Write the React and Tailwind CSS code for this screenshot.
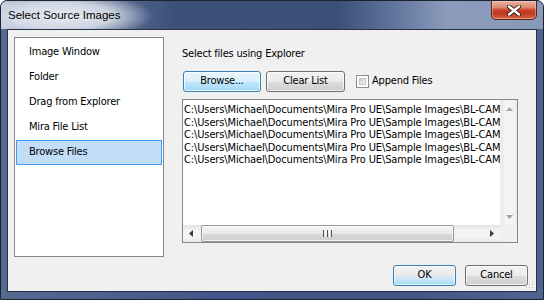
export default function App() {
  const items = ["Image Window", "Folder", "Drag from Explorer", "Mira File List", "Browse Files"];
  const files = [
    "C:\\Users\\Michael\\Documents\\Mira Pro UE\\Sample Images\\BL-CAM-01.fts",
    "C:\\Users\\Michael\\Documents\\Mira Pro UE\\Sample Images\\BL-CAM-02.fts",
    "C:\\Users\\Michael\\Documents\\Mira Pro UE\\Sample Images\\BL-CAM-03.fts",
    "C:\\Users\\Michael\\Documents\\Mira Pro UE\\Sample Images\\BL-CAM-04.fts",
    "C:\\Users\\Michael\\Documents\\Mira Pro UE\\Sample Images\\BL-CAM-05.fts",
  ];
  return (
    <div className="w-[544px] h-[300px] flex flex-col border border-[#1c2230] rounded-t-[7px] bg-[linear-gradient(to_right,#56698f_0%,#41578a_40%,#3f5482_70%,#4d6392_100%)] overflow-hidden font-['DejaVu_Sans_Condensed',Tahoma,sans-serif] text-[11px] tracking-[-0.2px] text-black">
      {/* title bar */}
      <div className="h-[28px] flex items-start bg-[radial-gradient(ellipse_90px_24px_at_62px_15px,rgba(232,237,243,1)_0%,rgba(222,228,237,0.85)_55%,rgba(222,228,237,0)_100%),linear-gradient(to_right,#b9c4d6_0%,#6d7fa2_12%,#3c5079_32%,#3b4f78_62%,#5e729a_72%,#8a9bbb_82%,#8899b9_100%)]">
        <span className="ml-[7px] mt-[7px] leading-[15px] text-[11.5px] tracking-normal font-['Liberation_Sans',Arial,sans-serif] text-black">Select Source Images</span>
        <div className="ml-auto mr-[6px] -mt-[1px] w-[46px] h-[20px] rounded-b-[5px] border border-[#5a2418] bg-[linear-gradient(to_bottom,#eab3a5_0%,#dc8a74_35%,#c8432a_50%,#c13a20_70%,#d8674a_100%)] shadow-[inset_0_0_0_1px_rgba(255,210,200,0.45)] flex items-center justify-center">
          <svg width="14" height="11" viewBox="0 0 14 11">
            <path d="M2 1.5 L12 9.5 M12 1.5 L2 9.5" stroke="#3a1a14" strokeWidth="4.2" strokeLinecap="round" />
            <path d="M2 1.5 L12 9.5 M12 1.5 L2 9.5" stroke="#ffffff" strokeWidth="2.4" strokeLinecap="round" />
          </svg>
        </div>
      </div>
      {/* client */}
      <div className="mx-[6px] h-[263px] border border-[#27324a] bg-[#f0f0f0] flex flex-col relative">
        <div className="flex pl-[6px] pt-[7px]">
          {/* left list */}
          <div className="w-[150px] h-[220px] border border-[#828790] bg-white flex flex-col pt-[2px] px-[1px]">
            {items.map((t, i) => (
              <div
                key={t}
                className={
                  i === 4
                    ? "h-[25px] flex items-center pl-[12px] border border-[#3d9bf2] bg-[#c2ddf8]"
                    : "h-[25px] flex items-center pl-[12px] border border-transparent"
                }
              >
                {t}
              </div>
            ))}
          </div>
          {/* right column */}
          <div className="ml-[18px] flex flex-col pt-[10px]">
            <div className="leading-[13px] h-[13px]">Select files using Explorer</div>
            <div className="mt-[11px] flex items-center">
              <div className="ml-[1px] w-[78px] h-[21px] rounded-[3px] border border-[#3c7fb1] bg-[linear-gradient(to_bottom,#eaf6fd_0%,#d9f0fc_50%,#bee6fd_51%,#a7d9f5_100%)] shadow-[inset_0_0_0_1px_rgba(255,255,255,0.7)] flex items-center justify-center">
                Browse...
              </div>
              <div className="ml-[5px] w-[79px] h-[21px] rounded-[3px] border border-[#707070] bg-[linear-gradient(to_bottom,#f2f2f2_0%,#ebebeb_50%,#dddddd_51%,#cfcfcf_100%)] shadow-[inset_0_0_0_1px_rgba(255,255,255,0.7)] flex items-center justify-center">
                Clear List
              </div>
              <div className="ml-[11px] w-[13px] h-[13px] border border-[#8e8f8f] bg-white p-[2px]">
                <div className="w-full h-full bg-[linear-gradient(135deg,#cbcbcb,#f6f6f6)] border border-[#c4c4c4]"></div>
              </div>
              <span className="ml-[3px]">Append Files</span>
            </div>
            {/* file list box */}
            <div className="mt-[7px] w-[336px] h-[144px] border border-[#828790] bg-white flex">
              <div className="flex-1 flex flex-col min-w-0">
                <div className="flex-1 overflow-hidden pl-[1px] pt-[4px] tracking-[-0.12px]">
                  {files.map((f, i) => (
                    <div key={i} className="leading-[12.5px] whitespace-nowrap">{f}</div>
                  ))}
                </div>
                {/* horizontal scrollbar */}
                <div className="h-[17px] flex bg-[linear-gradient(to_bottom,#e3e3e3,#f4f4f4_30%,#f4f4f4_70%,#e9e9e9)]">
                  <div className="w-[17px] flex items-center justify-center">
                    <svg width="5" height="7" viewBox="0 0 5 7"><path d="M4 0 L0 3.5 L4 7 Z" fill="#3c3c3c" /></svg>
                  </div>
                  <div className="ml-[1px] w-[253px] rounded-[2px] border border-[#979797] bg-[linear-gradient(to_bottom,#f5f5f5_0%,#e9e9e9_50%,#d9d9d9_51%,#cfcfcf_100%)] shadow-[inset_0_0_0_1px_rgba(255,255,255,0.7)] flex items-center justify-center">
                    <div className="flex gap-[1px]">
                      <div className="w-[1px] h-[7px] bg-[#555]"></div>
                      <div className="w-[1px] h-[7px] bg-[#fff]"></div>
                      <div className="w-[1px] h-[7px] bg-[#555]"></div>
                      <div className="w-[1px] h-[7px] bg-[#fff]"></div>
                      <div className="w-[1px] h-[7px] bg-[#555]"></div>
                    </div>
                  </div>
                  <div className="flex-1"></div>
                  <div className="w-[17px] flex items-center justify-center">
                    <svg width="5" height="7" viewBox="0 0 5 7"><path d="M1 0 L5 3.5 L1 7 Z" fill="#3c3c3c" /></svg>
                  </div>
                </div>
              </div>
              {/* vertical scrollbar */}
              <div className="w-[17px] flex flex-col bg-[linear-gradient(to_right,#e8e8e8,#f4f4f4_30%,#f4f4f4_70%,#ececec)] border-l border-[#f0f0f0]">
                <div className="h-[17px] flex items-center justify-center">
                  <svg width="7" height="4" viewBox="0 0 7 4"><path d="M0 4 L3.5 0 L7 4 Z" fill="#a3a3a3" /></svg>
                </div>
                <div className="flex-1"></div>
                <div className="h-[17px] flex items-center justify-center">
                  <svg width="7" height="4" viewBox="0 0 7 4"><path d="M0 0 L3.5 4 L7 0 Z" fill="#a3a3a3" /></svg>
                </div>
                <div className="h-[17px] bg-[#f0f0f0]"></div>
              </div>
            </div>
          </div>
        </div>
        {/* bottom buttons */}
        <div className="mt-[8px] flex justify-end pr-[8px]">
          <div className="w-[63px] h-[21px] rounded-[3px] border border-[#3c7fb1] bg-[linear-gradient(to_bottom,#f2f2f2_0%,#ebebeb_45%,#c9e7f7_70%,#a5d9f4_100%)] shadow-[inset_0_0_0_1px_rgba(255,255,255,0.6)] flex items-center justify-center">
            OK
          </div>
          <div className="ml-[9px] w-[63px] h-[21px] rounded-[3px] border border-[#707070] bg-[linear-gradient(to_bottom,#f2f2f2_0%,#ebebeb_50%,#dddddd_51%,#cfcfcf_100%)] shadow-[inset_0_0_0_1px_rgba(255,255,255,0.7)] flex items-center justify-center">
            Cancel
          </div>
        </div>
        {/* size grip */}
        <svg className="absolute right-[1px] bottom-[1px]" width="9" height="9" viewBox="0 0 9 9">
          {[[7, 1], [7, 4], [4, 4], [7, 7], [4, 7], [1, 7]].map(([x, y], i) => (
            <g key={i}>
              <rect x={x} y={y} width="1" height="1" fill="#fff" />
              <rect x={x - 1} y={y - 1} width="1" height="1" fill="#b8b8b8" />
            </g>
          ))}
        </svg>
      </div>
    </div>
  );
}
